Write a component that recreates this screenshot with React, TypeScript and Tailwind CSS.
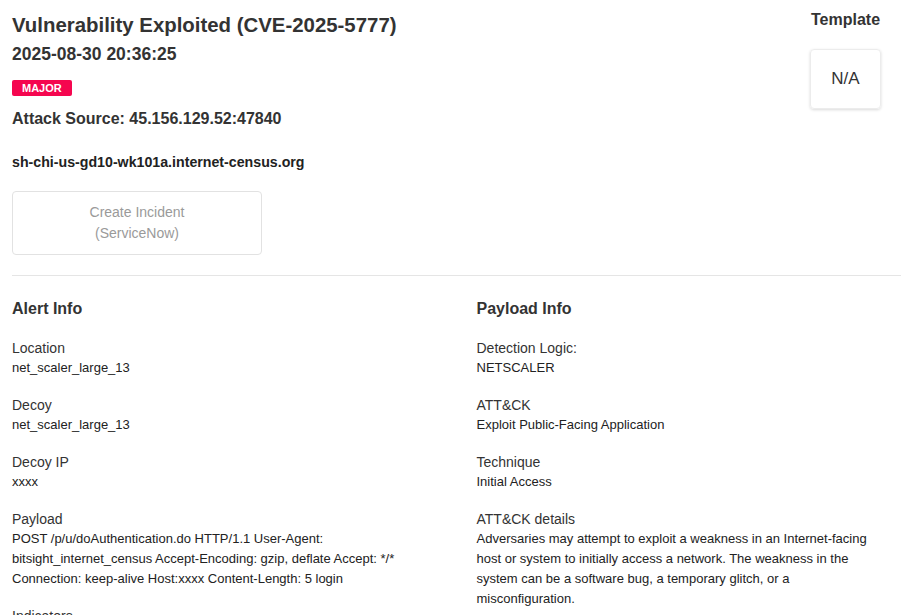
const alertInfo = [
  { label: "Location", value: "net_scaler_large_13" },
  { label: "Decoy", value: "net_scaler_large_13" },
  { label: "Decoy IP", value: "xxxx" },
  {
    label: "Payload",
    value:
      "POST /p/u/doAuthentication.do HTTP/1.1 User-Agent: bitsight_internet_census Accept-Encoding: gzip, deflate Accept: */* Connection: keep-alive Host:xxxx Content-Length: 5 login",
  },
  { label: "Indicators", value: "" },
];

const payloadInfo = [
  { label: "Detection Logic:", value: "NETSCALER" },
  { label: "ATT&CK", value: "Exploit Public-Facing Application" },
  { label: "Technique", value: "Initial Access" },
  {
    label: "ATT&CK details",
    value:
      "Adversaries may attempt to exploit a weakness in an Internet-facing host or system to initially access a network. The weakness in the system can be a software bug, a temporary glitch, or a misconfiguration.",
  },
];

function Field({ label, value }: { label: string; value: string }) {
  return (
    <div className="mb-[17px]">
      <div className="text-[14px] leading-[20px] text-[#333]">{label}</div>
      {value && <div className="text-[13px] leading-[20px] text-[#222] pr-4">{value}</div>}
    </div>
  );
}

function App() {
  return (
    <div
      className="min-h-screen bg-white text-[#333] px-3 pt-[11px]"
      style={{ fontFamily: '"Liberation Sans", Arial, sans-serif' }}
    >
      {/* Header */}
      <div className="flex justify-between">
        <div>
          <h1 className="text-[20.4px] leading-[28px] font-semibold text-[#333]">
            Vulnerability Exploited (CVE-2025-5777)
          </h1>
          <div className="mt-[3px] text-[17.5px] leading-[24px] font-semibold text-[#333]">
            2025-08-30 20:36:25
          </div>
          <span className="mt-[14px] inline-block rounded-[2px] bg-[#f5064f] px-[10px] text-[11px] leading-[16px] font-bold text-white">
            MAJOR
          </span>
          <div className="mt-[8px] text-[16px] leading-[24px] font-semibold text-[#333]">
            Attack Source: 45.156.129.52:47840
          </div>
          <div className="mt-[21px] text-[14.2px] leading-[20px] font-semibold text-[#222]">
            sh-chi-us-gd10-wk101a.internet-census.org
          </div>
          <button className="mt-[19px] w-[250px] h-[64px] rounded-[4px] border border-[#e2e2e2] text-[14px] leading-[21px] text-[#9a9a9a]">
            Create Incident
            <br />
            (ServiceNow)
          </button>
        </div>
        <div className="mr-[20px] flex flex-col items-center">
          <div className="text-[16px] leading-[24px] font-semibold text-[#333] mt-[-3px]">Template</div>
          <div className="mt-[17px] w-[71px] h-[60px] rounded-[4px] border border-[#ececec] shadow-[0_1px_3px_rgba(0,0,0,0.15)] flex items-center justify-center text-[17px] text-[#333]">
            N/A
          </div>
        </div>
      </div>

      <hr className="mt-[20px] border-t border-[#e5e5e5]" />

      {/* Info columns */}
      <div className="grid grid-cols-2 gap-x-10 mt-[21px]">
        <section>
          <h2 className="text-[16px] leading-[24px] font-semibold text-[#333] mb-[17px]">Alert Info</h2>
          {alertInfo.map((f, i) => (
            <Field key={i} label={f.label} value={f.value} />
          ))}
        </section>
        <section>
          <h2 className="text-[16px] leading-[24px] font-semibold text-[#333] mb-[17px]">Payload Info</h2>
          {payloadInfo.map((f, i) => (
            <Field key={i} label={f.label} value={f.value} />
          ))}
        </section>
      </div>
    </div>
  );
}

export default App;
